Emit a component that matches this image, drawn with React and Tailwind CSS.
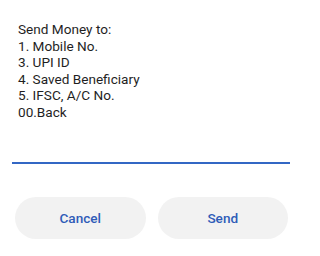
export default function App() {
  const lines = [
    'Send Money to:',
    '1. Mobile No.',
    '3. UPI ID',
    '4. Saved Beneficiary',
    '5. IFSC, A/C No.',
    '00.Back',
  ]

  return (
    <div className="h-[256px] w-[296px] bg-white font-['Roboto',sans-serif]">
      <div className="px-[18px] pt-[21px] text-[13.6px] leading-[16.5px] text-[#1f1f1f]">
        {lines.map((line) => (
          <p key={line}>{line}</p>
        ))}
      </div>
      <div className="ml-[12px] mr-[6px] mt-[12px] h-[32px] border-b-2 border-[#3367c4]" />
      <div className="mt-[33px] flex gap-[12px] pl-[15px] pr-[8px]">
        <button
          type="button"
          className="h-[42px] flex-1 rounded-full bg-[#f2f2f2] text-[13.6px] font-medium text-[#2f5cb8]"
        >
          Cancel
        </button>
        <button
          type="button"
          className="h-[42px] flex-1 rounded-full bg-[#f2f2f2] text-[13.6px] font-medium text-[#2f5cb8]"
        >
          Send
        </button>
      </div>
    </div>
  )
}
